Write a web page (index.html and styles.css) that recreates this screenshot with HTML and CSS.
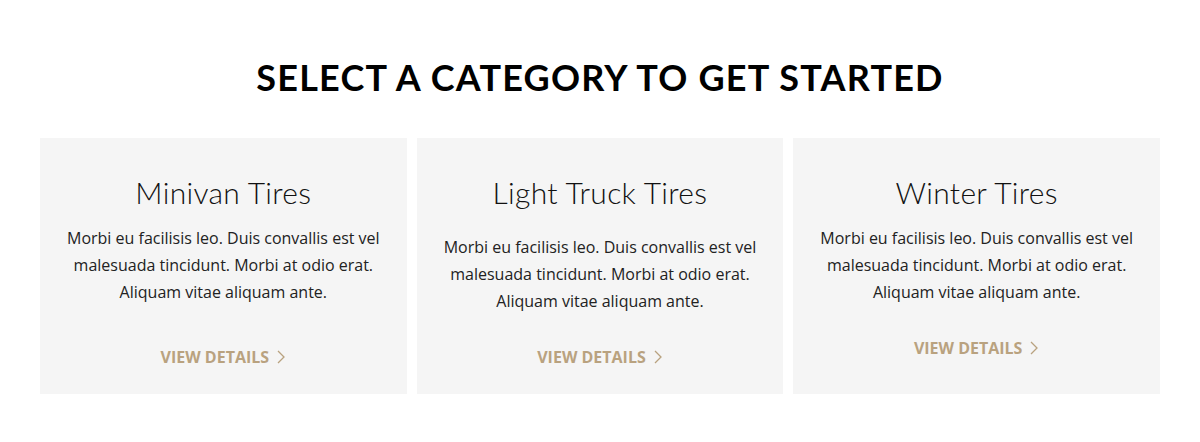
FILE: index.html
```html
<!DOCTYPE html>
<html>
<head>
<meta charset="utf-8">
<link rel="stylesheet" href="styles.css">
</head>
<body>
<section class="categories">
  <h2 class="section-title">SELECT A CATEGORY TO GET STARTED</h2>
  <div class="card-grid">
    <div class="card">
      <h3 class="card-title">Minivan Tires</h3>
      <p class="card-text">Morbi eu facilisis leo. Duis convallis est vel malesuada tincidunt. Morbi at odio erat. Aliquam vitae aliquam ante.</p>
      <a class="card-link" href="#">VIEW DETAILS <svg class="chev" width="10" height="16" viewBox="0 0 10 16"><path d="M2 2 L8 8 L2 14" fill="none" stroke="currentColor" stroke-width="1.3"/></svg></a>
    </div>
    <div class="card card-wide">
      <h3 class="card-title">Light Truck Tires</h3>
      <p class="card-text">Morbi eu facilisis leo. Duis convallis est vel malesuada tincidunt. Morbi at odio erat. Aliquam vitae aliquam ante.</p>
      <a class="card-link" href="#">VIEW DETAILS <svg class="chev" width="10" height="16" viewBox="0 0 10 16"><path d="M2 2 L8 8 L2 14" fill="none" stroke="currentColor" stroke-width="1.3"/></svg></a>
    </div>
    <div class="card card-tight">
      <h3 class="card-title">Winter Tires</h3>
      <p class="card-text">Morbi eu facilisis leo. Duis convallis est vel malesuada tincidunt. Morbi at odio erat. Aliquam vitae aliquam ante.</p>
      <a class="card-link" href="#">VIEW DETAILS <svg class="chev" width="10" height="16" viewBox="0 0 10 16"><path d="M2 2 L8 8 L2 14" fill="none" stroke="currentColor" stroke-width="1.3"/></svg></a>
    </div>
  </div>
</section>
</body>
</html>
```
FILE: styles.css
```css
html, body {
  margin: 0;
  padding: 0;
  background: #ffffff;
}
.categories {
  padding: 55px 40px 0;
}
.section-title {
  margin: 0;
  text-align: center;
  font-family: Lato, "Open Sans", sans-serif;
  font-weight: 700;
  font-size: 36px;
  line-height: 44px;
  letter-spacing: 1.2px;
  color: #000;
}
.card-grid {
  margin-top: 39px;
  display: grid;
  grid-template-columns: repeat(3, 1fr);
  gap: 10px;
}
.card {
  background: #f5f5f5;
  height: 256px;
  box-sizing: border-box;
  padding: 33px 20px 0;
  text-align: center;
  display: flex;
  flex-direction: column;
  align-items: center;
}
.card-title {
  margin: 0;
  font-family: Lato, "Open Sans", sans-serif;
  font-weight: 300;
  font-size: 30px;
  line-height: 42px;
  letter-spacing: 0.3px;
  color: #111;
}
.card-text {
  margin: 12px 0 0;
  font-family: "Open Sans", sans-serif;
  font-size: 16px;
  line-height: 27px;
  color: #222;
  max-width: 330px;
}
.card-wide .card-text {
  margin-top: 21px;
}
.card-link {
  margin-top: 40px;
  font-family: "Open Sans", sans-serif;
  font-weight: 700;
  font-size: 16px;
  line-height: 22px;
  color: #b9a27f;
  text-decoration: none;
  display: inline-flex;
  align-items: center;
  gap: 7px;
}
.card-wide .card-link {
  margin-top: 31px;
}
.card-tight .card-link {
  margin-top: 31px;
}
.chev {
  display: block;
}
```
